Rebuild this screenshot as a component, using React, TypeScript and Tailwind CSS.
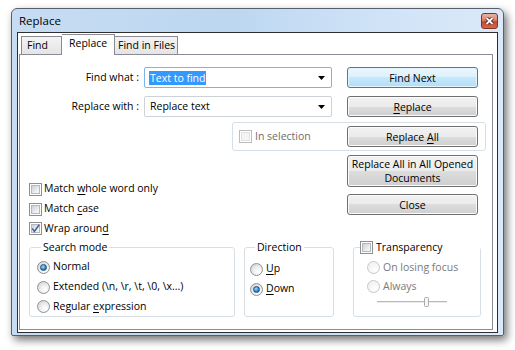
import React from 'react';

const Checkbox = ({ checked = false, disabled = false }: { checked?: boolean; disabled?: boolean }) => (
  <div
    className={`relative w-[13px] h-[13px] shrink-0 border bg-white p-[1px] ${
      disabled ? 'border-[#bcbcbc]' : 'border-[#8e8f8f]'
    }`}
  >
    <div
      className={`w-full h-full border ${
        disabled
          ? 'border-[#e2e2e2] bg-[#f4f4f4]'
          : 'border-[#b5b9be] bg-[linear-gradient(135deg,#cdd1d6,#eef0f2_70%,#f8f8f8)]'
      }`}
    />
    {checked && (
      <svg className="absolute -left-[1px] -top-[1px]" width="13" height="13" viewBox="0 0 13 13">
        <path d="M3.2 6.4L5.4 9.4L10.2 2.8" fill="none" stroke="#4b5f90" strokeWidth="1.5" />
      </svg>
    )}
  </div>
);

const Radio = ({ checked = false, disabled = false }: { checked?: boolean; disabled?: boolean }) => (
  <div
    className={`w-[13px] h-[13px] shrink-0 rounded-full border flex items-center justify-center ${
      disabled
        ? 'border-[#c8c8c8] bg-[radial-gradient(circle_at_65%_70%,#ffffff,#ececec)]'
        : 'border-[#8f9295] bg-[radial-gradient(circle_at_65%_70%,#ffffff,#f0f0f0_40%,#c9ccd0)]'
    }`}
  >
    {checked && (
      <div className="w-[7px] h-[7px] rounded-full border border-[#1d5180] bg-[radial-gradient(circle_at_40%_35%,#a9e1fd,#3d8fd4_50%,#0d4c8c)]" />
    )}
  </div>
);

const Btn = ({
  children,
  def = false,
  className = '',
}: {
  children: React.ReactNode;
  def?: boolean;
  className?: string;
}) => (
  <button
    className={`w-[131px] shrink-0 rounded-[3px] border text-black leading-[14px] flex items-center justify-center text-center whitespace-nowrap ${
      def
        ? 'border-[#3c7fb1] bg-[linear-gradient(#eaf6fd_0%,#dcf1fc_50%,#c6e8fb_50%,#b2def6_100%)] shadow-[inset_0_0_0_1px_#e6f5fd]'
        : 'border-[#707070] bg-[linear-gradient(#f2f2f2_0%,#ebebeb_50%,#dddddd_50%,#cfcfcf_100%)] shadow-[inset_0_0_0_1px_#fbfbfb]'
    } ${className}`}
  >
    <span>{children}</span>
  </button>
);

const Combo = ({ children, focused = false }: { children: React.ReactNode; focused?: boolean }) => (
  <div
    className={`ml-[5px] w-[188px] h-[21px] shrink-0 border bg-white rounded-[2px] flex items-center pl-[4px] pr-[6px] ${
      focused ? 'border-[#7eb4ea]' : 'border-[#cdd2d8]'
    }`}
  >
    {children}
    <svg className="ml-auto" width="7" height="4" viewBox="0 0 7 4">
      <path d="M0 0H7L3.5 4Z" fill="#000" />
    </svg>
  </div>
);

const U = ({ children }: { children: React.ReactNode }) => (
  <span className="underline underline-offset-[2px]">{children}</span>
);

export default function App() {
  return (
    <div className="w-[515px] h-[350px] bg-white overflow-hidden pl-[11px] pt-[8px] font-['Open_Sans','Noto_Sans',sans-serif] text-[10.5px] text-black">
      <div className="w-[493px] h-[328px] border border-[#56606c] rounded-t-[6px] rounded-b-[2px] bg-[linear-gradient(to_right,#c6dcf2,#bdd7f1_45%,#d0e3f7_75%,#dbe9f9)] shadow-[3px_4px_9px_rgba(0,0,0,0.55)] flex flex-col">
        {/* title bar */}
        <div className="h-[23px] shrink-0 flex items-center pl-[7px] pr-[5px]">
          <span className="text-[11.5px]">Replace</span>
          <div className="ml-auto w-[17px] h-[16px] rounded-[3px] border border-[#7d3526] bg-[linear-gradient(#ecb5a4,#dc806a_45%,#c8472d_55%,#cf6a4e)] flex items-center justify-center">
            <svg width="9" height="8" viewBox="0 0 9 8">
              <path d="M1.5 1L7.5 7M7.5 1L1.5 7" stroke="#3d1a12" strokeWidth="3.4" />
              <path d="M1.5 1L7.5 7M7.5 1L1.5 7" stroke="#ffffff" strokeWidth="1.8" />
            </svg>
          </div>
        </div>

        {/* client area */}
        <div className="mx-[5px] h-[301px] border border-[#2e2e2e] bg-white pl-[1px] pr-[4px] pb-[2px] flex flex-col">
          <div className="h-[21px] shrink-0 flex items-end pl-[2px] whitespace-nowrap">
            <div className="w-[41px] h-[18px] border border-b-0 border-[#898c95] bg-[linear-gradient(#f4f4f4,#e4e4e4)] flex items-center pl-[5px]">
              Find
            </div>
            <div className="relative z-10 -mb-[1px] w-[53px] h-[21px] border border-l-0 border-b-0 border-[#898c95] bg-white flex items-center pl-[7px] pb-[2px]">
              Replace
            </div>
            <div className="w-[63px] h-[18px] border border-l-0 border-b-0 border-[#898c95] bg-[linear-gradient(#f4f4f4,#e4e4e4)] flex items-center pl-[3px]">
              Find in Files
            </div>
          </div>

          {/* tab page */}
          <div className="flex-1 border border-[#898c95] bg-white flex flex-col">
            <div className="mt-[12px] h-[21px] flex items-center">
              <div className="w-[119px] text-right">Find what :</div>
              <Combo focused>
                <span className="bg-[#3399ff] text-white leading-[14px] px-[1px]">Text to find</span>
              </Combo>
              <Btn def className="ml-[15px] h-[21px]">
                Find Next
              </Btn>
            </div>

            <div className="mt-[8px] h-[21px] flex items-center">
              <div className="w-[119px] text-right">Replace with :</div>
              <Combo>
                <span className="pl-[1px]">Replace text</span>
              </Combo>
              <Btn className="ml-[15px] h-[21px]">
                <U>R</U>eplace
              </Btn>
            </div>

            <div className="mt-[5px] ml-[212px] w-[254px] h-[29px] border border-[#d5dfe5] rounded-[3px] flex items-center pl-[6px]">
              <Checkbox disabled />
              <span className="ml-[3px] text-[#6d6d6d]">In selection</span>
              <Btn className="ml-auto mr-[7px] h-[21px]">
                Replace <U>A</U>ll
              </Btn>
            </div>

            <div className="flex">
              <div className="pl-[9px] pt-[28px] flex flex-col">
                <div className="h-[20px] flex items-center">
                  <Checkbox />
                  <span className="ml-[2px]">
                    Match <U>w</U>hole word only
                  </span>
                </div>
                <div className="h-[20px] flex items-center">
                  <Checkbox />
                  <span className="ml-[2px]">
                    Match <U>c</U>ase
                  </span>
                </div>
                <div className="h-[19px] flex items-center">
                  <Checkbox checked />
                  <span className="ml-[2px]">
                    Wrap aroun<U>d</U>
                  </span>
                </div>
              </div>
              <div className="ml-auto mr-[14px] pt-[4px] flex flex-col">
                <Btn className="h-[32px]">
                  Replace All in All Opened
                  <br />
                  Documents
                </Btn>
                <Btn className="mt-[7px] h-[21px]">Close</Btn>
              </div>
            </div>

            <div className="mt-[2px] flex items-start">
              <fieldset className="ml-[9px] w-[206px] h-[77px] border border-[#d5dfe5] rounded-[3px] pl-[7px] pt-[2px]">
                <legend className="ml-[4px] px-[2px] leading-[15px]">Search mode</legend>
                <div className="h-[20px] flex items-center">
                  <Radio checked />
                  <span className="ml-[3px]">Normal</span>
                </div>
                <div className="h-[20px] flex items-center">
                  <Radio />
                  <span className="ml-[3px]">Extended (\n, \r, \t, \0, \x...)</span>
                </div>
                <div className="h-[19px] flex items-center">
                  <Radio />
                  <span className="ml-[3px]">
                    Regular <U>e</U>xpression
                  </span>
                </div>
              </fieldset>

              <fieldset className="ml-[9px] w-[90px] h-[77px] border border-[#d5dfe5] rounded-[3px] pl-[5px] pt-[4px]">
                <legend className="ml-[5px] px-[2px] leading-[15px]">Direction</legend>
                <div className="h-[20px] flex items-center">
                  <Radio />
                  <span className="ml-[3px]">
                    <U>U</U>p
                  </span>
                </div>
                <div className="h-[20px] flex items-center">
                  <Radio checked />
                  <span className="ml-[3px]">
                    <U>D</U>own
                  </span>
                </div>
              </fieldset>

              <fieldset className="ml-[19px] w-[127px] h-[77px] border border-[#d5dfe5] rounded-[3px] pl-[13px] pt-[3px]">
                <legend className="-ml-[7px] w-[120px] leading-[15px] flex items-center bg-white">
                  <Checkbox />
                  <span className="ml-[3px]">Transparency</span>
                </legend>
                <div className="h-[19px] flex items-center text-[#7a7a7a]">
                  <Radio disabled />
                  <span className="ml-[3px]">On losing focus</span>
                </div>
                <div className="h-[19px] flex items-center text-[#7a7a7a]">
                  <Radio disabled />
                  <span className="ml-[3px]">Always</span>
                </div>
                <svg className="ml-[10px] block" width="72" height="12" viewBox="0 0 72 12">
                  <line x1="0" y1="5.5" x2="70" y2="5.5" stroke="#b9b9b9" />
                  <line x1="0" y1="6.5" x2="70" y2="6.5" stroke="#ececec" />
                  <rect x="47.5" y="1.5" width="4" height="9" rx="1" fill="#f6f6f6" stroke="#a9a9a9" />
                </svg>
              </fieldset>
            </div>
          </div>
        </div>
      </div>
    </div>
  );
}
